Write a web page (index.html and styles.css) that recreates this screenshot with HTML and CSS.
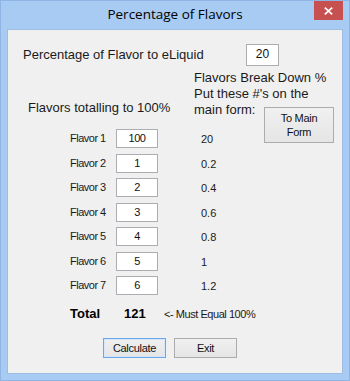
FILE: index.html
```html
<!DOCTYPE html>
<html>
<head>
<meta charset="utf-8">
<link rel="stylesheet" href="styles.css">
</head>
<body>
<div class="window">
  <div class="titlebar">
    <span class="title">Percentage of Flavors</span>
    <div class="close"><svg width="9" height="8" viewBox="0 0 9 8"><path d="M0.8 0.6 L8.2 7.4 M8.2 0.6 L0.8 7.4" stroke="#fff" stroke-width="1.7" fill="none"/></svg></div>
  </div>
  <div class="client">
    <div class="top-row">
      <span class="lbl-lg">Percentage of Flavor to eLiquid</span>
      <div class="field field-lg">20</div>
    </div>
    <div class="grid">
      <div class="breakdown">Flavors Break Down %<br>Put these #'s on the<br>main form:</div>
      <div class="totalling">Flavors totalling to 100%</div>
      <div class="btn btn-main">To Main<br>Form</div>
      <div class="flavors">
        <span class="flabel">Flavor 1</span><div class="field">100</div><span class="fval">20</span>
        <span class="flabel">Flavor 2</span><div class="field">1</div><span class="fval">0.2</span>
        <span class="flabel">Flavor 3</span><div class="field">2</div><span class="fval">0.4</span>
        <span class="flabel">Flavor 4</span><div class="field">3</div><span class="fval">0.6</span>
        <span class="flabel">Flavor 5</span><div class="field">4</div><span class="fval">0.8</span>
        <span class="flabel">Flavor 6</span><div class="field">5</div><span class="fval">1</span>
        <span class="flabel">Flavor 7</span><div class="field">6</div><span class="fval">1.2</span>
      </div>
    </div>
    <div class="total-row">
      <span class="total-lbl">Total</span>
      <span class="total-num">121</span>
      <span class="total-note">&lt;- Must Equal 100%</span>
    </div>
    <div class="actions">
      <div class="btn btn-default">Calculate</div>
      <div class="btn">Exit</div>
    </div>
  </div>
</div>
</body>
</html>
```
FILE: styles.css
```css
* { box-sizing: border-box; }
html, body { margin: 0; padding: 0; }
body {
  width: 350px;
  height: 381px;
  overflow: hidden;
  font-family: "Liberation Sans", Arial, sans-serif;
  color: #1a1a1a;
}
.window {
  width: 350px;
  height: 381px;
  background: #a7cbf2;
  box-shadow: inset 0 0 0 1px #8fb5e4;
  display: flex;
  flex-direction: column;
}
.titlebar {
  height: 30px;
  display: grid;
  grid-template-columns: 1fr auto 1fr;
  align-items: start;
}
.title {
  grid-column: 2;
  font-family: "Open Sans", "Noto Sans", sans-serif;
  font-size: 13.5px;
  line-height: 18px;
  margin-top: 5px;
  color: #000;
  white-space: nowrap;
}
.close {
  grid-column: 3;
  justify-self: end;
  width: 29px;
  height: 19px;
  margin-top: 1px;
  margin-right: 7px;
  background: #c75050;
  display: flex;
  align-items: center;
  justify-content: center;
}
.client {
  margin: 0 8px;
  height: 343px;
  background: #f0f0f0;
  box-shadow: 0 0 0 1px #9dbde2;
}
.top-row {
  padding: 14px 0 0 15px;
  display: grid;
  grid-template-columns: 190px 33px;
  align-items: center;
}
.lbl-lg {
  font-size: 13px;
  line-height: 16px;
  white-space: nowrap;
}
.field {
  background: #fff;
  border: 1px solid #abadb3;
  height: 19px;
  width: 42px;
  text-align: center;
  font-size: 11px;
  letter-spacing: -0.4px;
  line-height: 16px;
  color: #111;
}
.field-lg {
  width: 33px;
  height: 22px;
  font-size: 12px;
  letter-spacing: 0;
  line-height: 19px;
}
.grid {
  display: grid;
  grid-template-columns: 186px 70px 70px 8px;
  grid-template-rows: 41px 22px auto;
}
.breakdown {
  grid-column: 2 / 5;
  grid-row: 1 / 3;
  padding-top: 4px;
  font-size: 13px;
  line-height: 16px;
  white-space: nowrap;
}
.totalling {
  grid-column: 1;
  grid-row: 1 / 3;
  align-self: end;
  margin-bottom: 13px;
  padding-left: 20px;
  font-size: 13px;
  line-height: 16px;
  white-space: nowrap;
}
.btn {
  height: 20px;
  width: 63px;
  border: 1px solid #acacac;
  background: linear-gradient(#f0f0f0, #e5e5e5);
  font-size: 11px;
  letter-spacing: -0.3px;
  line-height: 18px;
  text-align: center;
  color: #111;
}
.btn-main {
  grid-column: 3;
  grid-row: 2 / 4;
  align-self: start;
  width: 70px;
  height: 36px;
  padding-top: 3px;
  line-height: 14px;
}
.btn-default {
  border-color: #6aa7e6;
  box-shadow: inset 0 0 0 1px #d5e7f9;
}
.flavors {
  grid-column: 1 / 3;
  grid-row: 3;
  display: grid;
  grid-template-columns: 62px 46px 42px 43px 1fr;
  grid-auto-rows: 24.5px;
  align-items: start;
}
.flabel {
  grid-column: 2;
  font-size: 11px;
  letter-spacing: -0.5px;
  line-height: 19px;
  white-space: nowrap;
}
.field { grid-column: 3; }
.fval {
  grid-column: 5;
  font-size: 11px;
  line-height: 19px;
  padding-top: 1px;
}
.total-row {
  margin-top: 5px;
  padding-left: 62px;
  display: grid;
  grid-template-columns: 54px 40px auto;
  align-items: baseline;
}
.total-lbl, .total-num {
  font-size: 13px;
  font-weight: bold;
  line-height: 16px;
  color: #000;
}
.total-note {
  font-size: 11px;
  letter-spacing: -0.45px;
  white-space: nowrap;
}
.actions {
  margin-top: 16px;
  padding-left: 95px;
  display: flex;
  gap: 8px;
}
```
